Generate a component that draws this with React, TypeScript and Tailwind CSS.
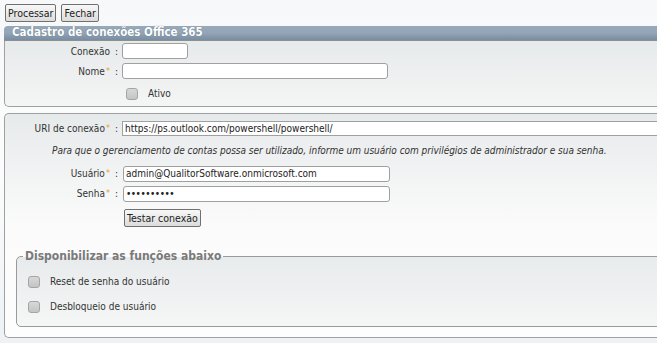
import React from 'react'

const font = 'font-["DejaVu_Sans_Condensed","DejaVu_Sans",sans-serif]'

function Req() {
  return <sup className="text-[#e8a030] text-[9px] relative -top-[1px] ml-[1px]">*</sup>
}

function Label({ children, req }: { children: React.ReactNode; req?: boolean }) {
  return (
    <div className="w-[114px] shrink-0 text-right text-[#333] pr-[1px]">
      {children}
      {req && <Req />}
      <span className="ml-[5px]">:</span>
    </div>
  )
}

function Check({ label, className = '' }: { label: string; className?: string }) {
  return (
    <div className={`flex items-center ${className}`}>
      <span className="w-[12px] h-[12px] rounded-[3px] border border-[#a5a5a5] bg-gradient-to-b from-[#d8d8d8] to-[#c4c4c4] shrink-0" />
      <span className="ml-[10px] text-[#333]">{label}</span>
    </div>
  )
}

const inputCls = 'h-[16px] border border-[#a0a0a0] rounded-[3px] bg-white px-[2px] text-[#222] flex items-center leading-none'
const btnCls = 'h-[18px] px-[2px] border border-[#707070] rounded-[2px] bg-gradient-to-b from-[#f8f8f8] to-[#dcdcdc] text-[#222] text-[10.5px] leading-none'

export default function App() {
  return (
    <div className={`${font} text-[10px] w-[657px] h-[343px] overflow-hidden bg-gradient-to-b from-[#f6f8f9] via-[#fcfcfc] to-[#eef2f5]`}>
      {/* Toolbar */}
      <div className="flex gap-[5px] pt-[4px] pl-[5px]">
        <button className={btnCls}>Processar</button>
        <button className={btnCls}>Fechar</button>
      </div>

      {/* Panel 1 */}
      <div className="ml-[4px] mt-[4px] w-[700px]">
        <div className="h-[15px] rounded-tl-[4px] bg-gradient-to-b from-[#98aaba] via-[#93a5b6] to-[#788da1] border-b border-[#8f8f8f] flex items-center pl-[8px]">
          <span className="text-white font-bold text-[11.5px] leading-none [text-shadow:0_0_1px_#55677a]">Cadastro de conexões Office 365</span>
        </div>
        <div className="h-[66px] border-l border-b border-[#a0a0a0] rounded-bl-[5px] bg-gradient-to-b from-[#e7eaeb] to-[#f4f5f5] pt-[2px]">
          <div className="flex items-center h-[16px]">
            <Label>Conexão</Label>
            <div className={`${inputCls} ml-[3px] w-[66px]`} />
          </div>
          <div className="flex items-center h-[16px] mt-[4px]">
            <Label req>Nome</Label>
            <div className={`${inputCls} ml-[3px] w-[266px]`} />
          </div>
          <Check label="Ativo" className="ml-[121px] mt-[7px]" />
        </div>
      </div>

      {/* Panel 2 */}
      <div className="ml-[4px] mt-[6px] w-[700px] h-[225px] border-l border-t border-b border-[#a0a0a0] rounded-l-[5px] bg-gradient-to-b from-[#e7eaeb] via-[#fbfbfb] to-[#fdfdfd] pt-[7px]">
        <div className="flex items-center h-[15px]">
          <Label req>URI de conexão</Label>
          <div className="ml-[3px] flex-1 h-[15px] border border-[#a0a0a0] bg-white px-[2px] text-[#222] flex items-center leading-none">https://ps.outlook.com/powershell/powershell/</div>
        </div>
        <div className="mt-[10px] ml-[47px] italic text-[#333] leading-none tracking-[-0.03px]">
          Para que o gerenciamento de contas possa ser utilizado, informe um usuário com privilégios de administrador e sua senha.
        </div>
        <div className="flex items-center h-[15px] mt-[10px]">
          <Label req>Usuário</Label>
          <div className={`${inputCls} ml-[4px] w-[267px] h-[15px]`}>admin@QualitorSoftware.onmicrosoft.com</div>
        </div>
        <div className="flex items-center h-[15px] mt-[5px]">
          <Label req>Senha</Label>
          <div className={`${inputCls} ml-[4px] w-[267px] h-[15px] tracking-[-0.5px]`}>••••••••••</div>
        </div>
        <button className={`${btnCls} ml-[119px] mt-[8px]`}>Testar conexão</button>

        <fieldset className="ml-[11px] mt-[20px] h-[80px] border border-[#9a9a9a] rounded-[5px] bg-gradient-to-b from-[#e8ebec] to-[#f5f6f6] px-[11px] pt-[4px]">
          <legend className="px-[2px] ml-[-5px] text-[12px] font-bold text-[#7a7a7a]">Disponibilizar as funções abaixo</legend>
          <Check label="Reset de senha do usuário" className="mt-[5px]" />
          <Check label="Desbloqueio de usuário" className="mt-[10px]" />
        </fieldset>
      </div>
    </div>
  )
}
